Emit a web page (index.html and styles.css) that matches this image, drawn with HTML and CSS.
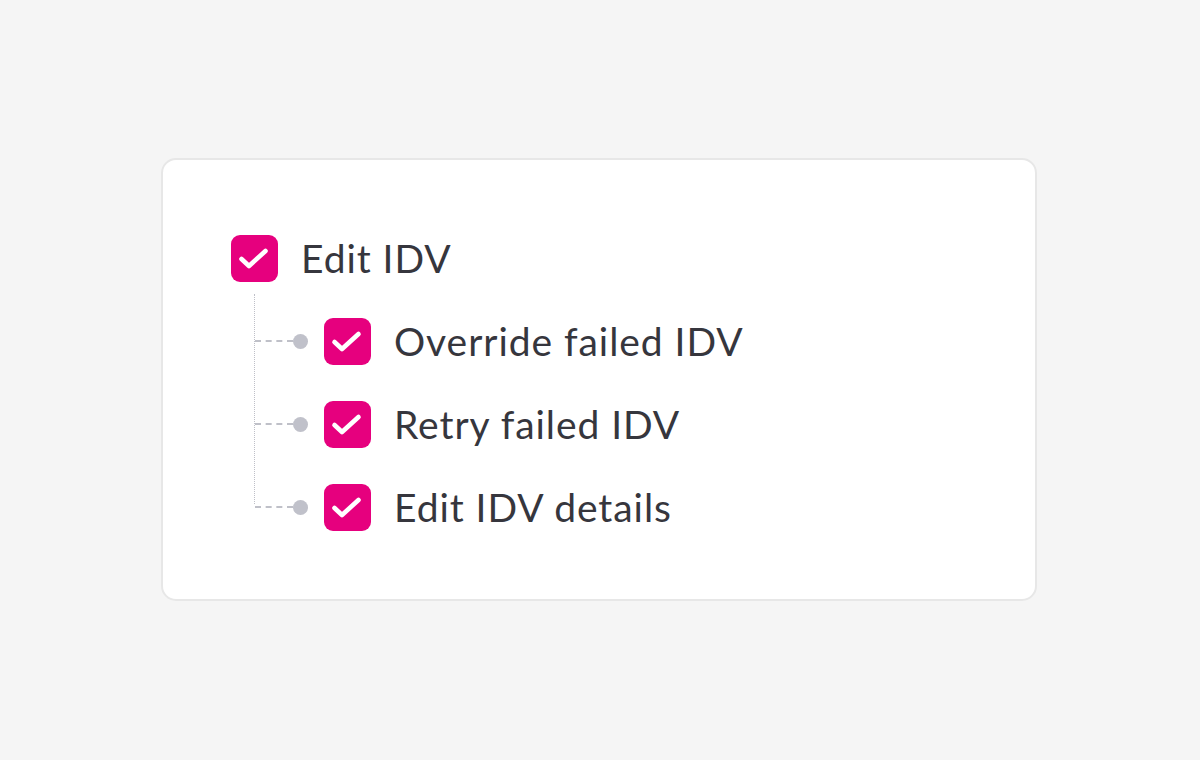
FILE: index.html
```html
<!DOCTYPE html>
<html>
<head>
<meta charset="utf-8">
<link rel="stylesheet" href="styles.css">
</head>
<body>
<main class="stage">
  <section class="card">
    <div class="item parent">
      <span class="box"><svg viewBox="0 0 47 47"><path d="M10.5 24l7.5 7 16.5-15"/></svg></span>
      <span class="label">Edit IDV</span>
    </div>
    <div class="children">
      <div class="item child">
        <span class="node"></span>
        <span class="box"><svg viewBox="0 0 47 47"><path d="M10.5 24l7.5 7 16.5-15"/></svg></span>
        <span class="label">Override failed IDV</span>
      </div>
      <div class="item child">
        <span class="node"></span>
        <span class="box"><svg viewBox="0 0 47 47"><path d="M10.5 24l7.5 7 16.5-15"/></svg></span>
        <span class="label">Retry failed IDV</span>
      </div>
      <div class="item child last">
        <span class="node"></span>
        <span class="box"><svg viewBox="0 0 47 47"><path d="M10.5 24l7.5 7 16.5-15"/></svg></span>
        <span class="label">Edit IDV details</span>
      </div>
    </div>
  </section>
</main>
</body>
</html>
```

FILE: styles.css
```css
html, body {
  margin: 0;
  padding: 0;
  background: #f5f5f5;
}
.stage {
  width: 1200px;
  height: 760px;
  padding-top: 158px;
  padding-left: 161px;
  box-sizing: border-box;
}
.card {
  width: 876px;
  height: 443px;
  box-sizing: border-box;
  background: #fff;
  border: 2px solid #e7e7e7;
  border-radius: 15px;
  padding: 75px 0 0 68px;
  font-family: Lato, "Noto Sans", sans-serif;
  color: #36363d;
}
.item {
  display: flex;
  align-items: center;
  height: 47px;
}
.box {
  width: 47px;
  height: 47px;
  border-radius: 9px;
  background: #e6007e;
  display: flex;
  flex: none;
}
.box svg {
  width: 47px;
  height: 47px;
  fill: none;
  stroke: #fff;
  stroke-width: 4.6;
  stroke-linecap: round;
  stroke-linejoin: round;
}
.label {
  font-size: 39px;
  line-height: 47px;
  margin-left: 23px;
  letter-spacing: 0.95px;
}
.children {
  position: relative;
  margin-left: 23px;
  padding-top: 36px;
  display: flex;
  flex-direction: column;
  gap: 36px;
}
.children::before {
  content: "";
  position: absolute;
  left: 0;
  top: 12px;
  height: 210px;
  border-left: 1.5px dotted #bfc0c8;
}
.child .node {
  position: relative;
  width: 70px;
  height: 15px;
  flex: none;
}
.child .node::before {
  content: "";
  position: absolute;
  left: 1px;
  top: 6px;
  width: 38px;
  border-top: 2px dashed #bfc0c8;
}
.child .node::after {
  content: "";
  position: absolute;
  left: 39px;
  top: 0;
  width: 15px;
  height: 15px;
  border-radius: 50%;
  background: #c0c1ca;
}
.child .label {
  margin-left: 23px;
}
```
